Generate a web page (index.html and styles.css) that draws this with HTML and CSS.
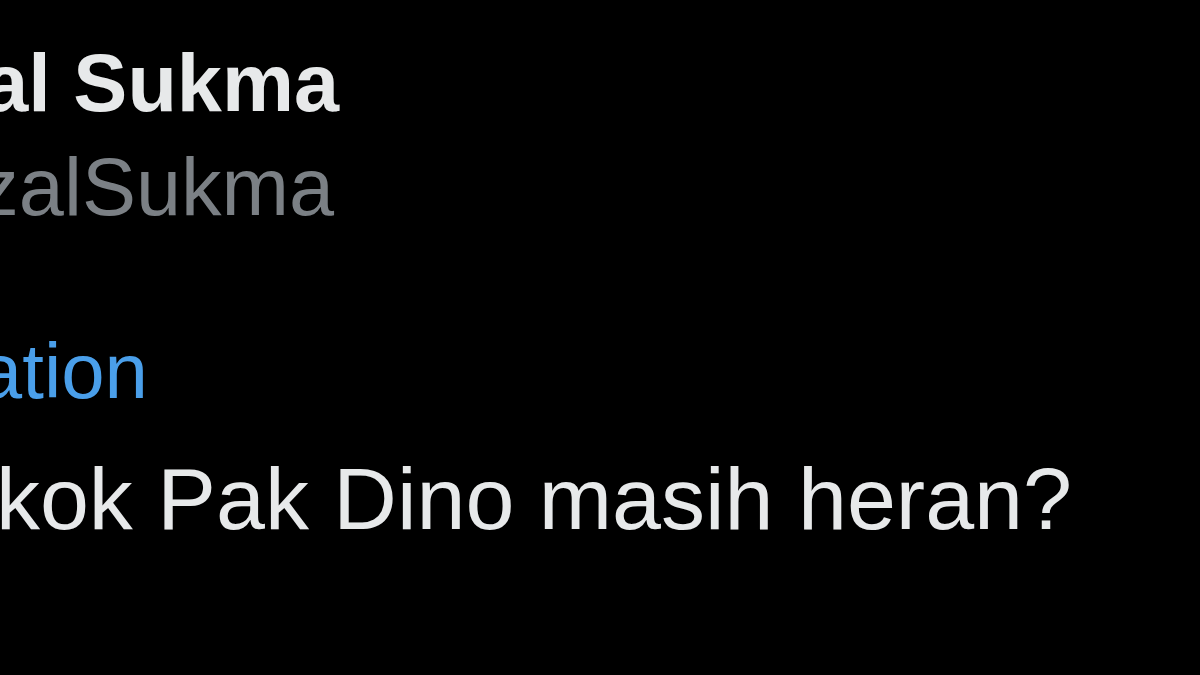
FILE: index.html
```html
<!DOCTYPE html>
<html lang="id">
<head>
<meta charset="utf-8">
<title>Tweet</title>
<link rel="stylesheet" href="styles.css">
</head>
<body>
<main class="tweet">
  <div class="line name-line"><span class="name">Rizal Sukma</span></div>
  <div class="line handle-line"><span class="handle">@RizalSukma</span></div>
  <div class="line link-line"><span class="link">Show translation</span></div>
  <div class="line text-line"><span class="text">Lalu kok Pak Dino masih heran?</span></div>
</main>
</body>
</html>
```
FILE: styles.css
```css
html, body {
  margin: 0;
  padding: 0;
  background: #000;
  width: 1200px;
  height: 675px;
  overflow: hidden;
}
.tweet {
  display: flex;
  flex-direction: column;
  font-family: "Liberation Sans", Arial, sans-serif;
  padding-top: 33px;
}
.line {
  display: flex;
  justify-content: flex-end;
  white-space: nowrap;
}
.name-line { width: 339px; }
.name {
  font-size: 81px;
  line-height: 100px;
  font-weight: 700;
  color: #e7e9ea;
}
.handle-line { width: 334px; margin-top: 4px; }
.handle {
  font-size: 81px;
  line-height: 100px;
  color: #7b8085;
}
.link-line { width: 148px; margin-top: 84px; }
.link {
  font-size: 78px;
  line-height: 100px;
  color: #4a9fea;
}
.text-line { width: 1072px; margin-top: 23px; }
.text {
  font-size: 88px;
  line-height: 110px;
  color: #e7e9ea;
}
```
